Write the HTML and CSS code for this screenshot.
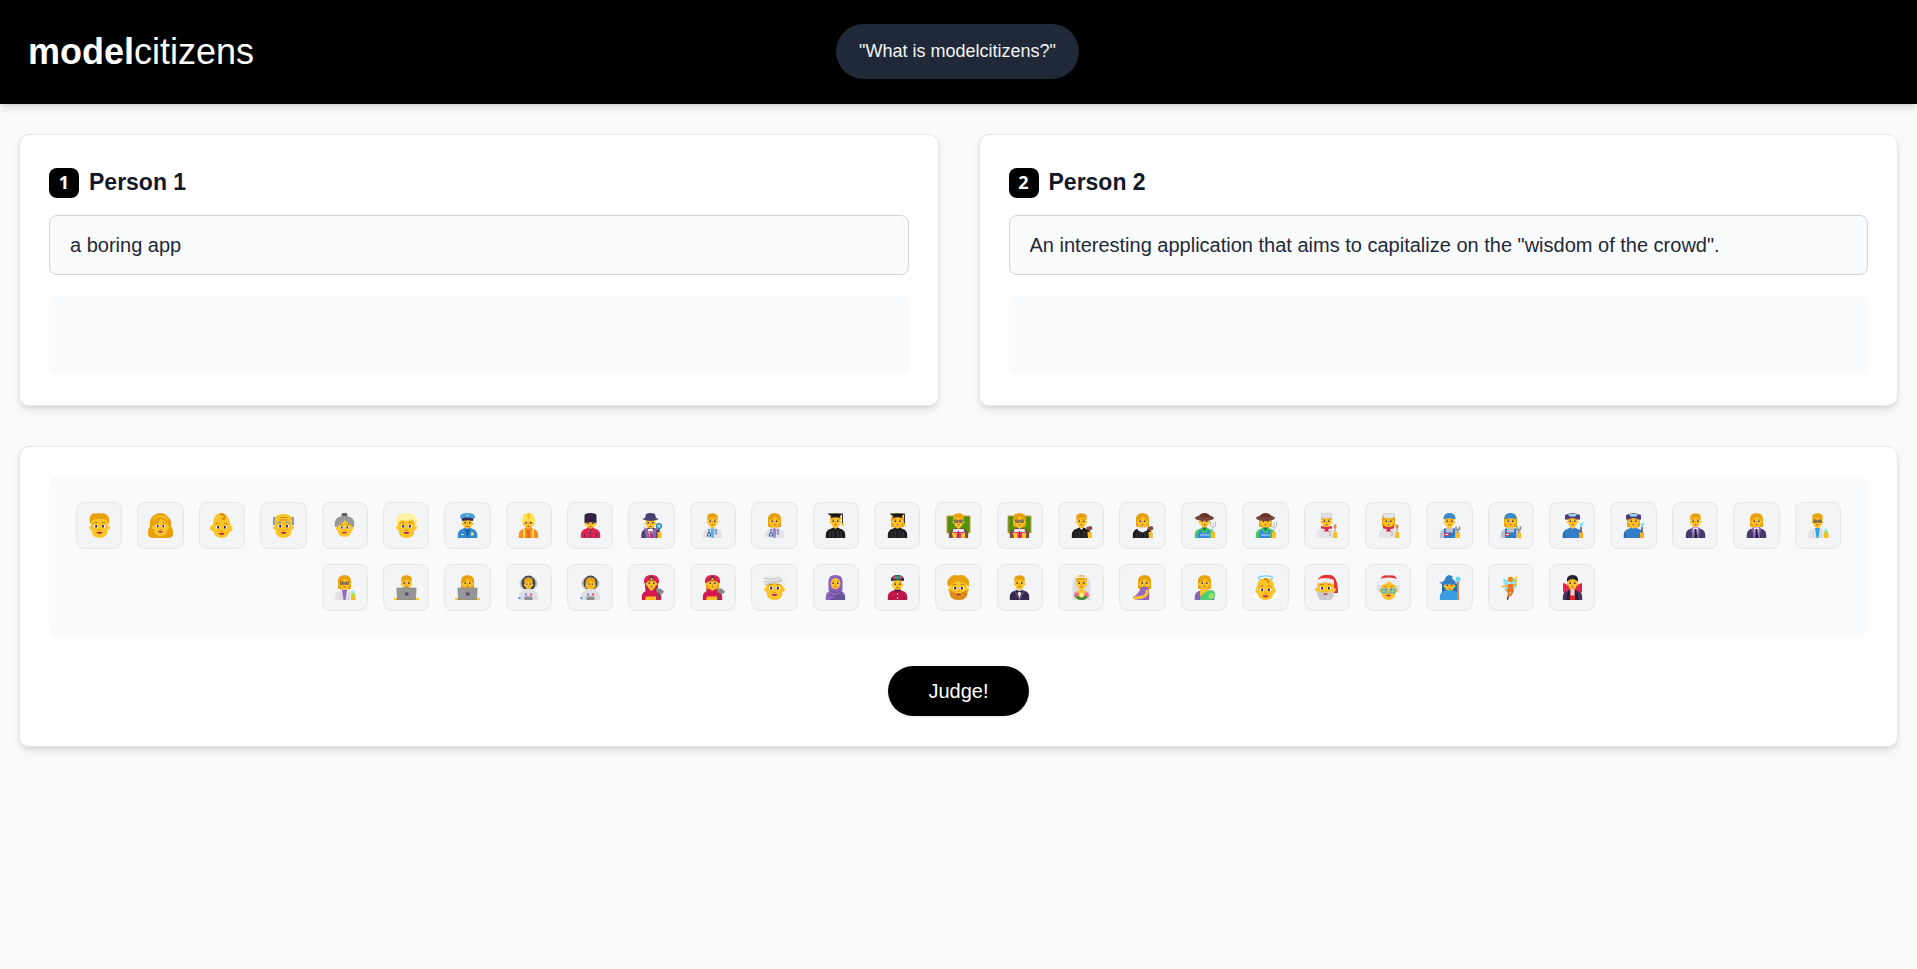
FILE: index.html
```html
<!DOCTYPE html>
<html lang="en">
<head>
<meta charset="utf-8">
<meta name="viewport" content="width=device-width, initial-scale=1">
<title>modelcitizens</title>
<link rel="stylesheet" href="styles.css">
</head>
<body>
<svg class="sprites" aria-hidden="true">
  <defs>
    <!-- large head -->
    <g id="face">
      <path fill="#fac42b" d="M4 7q0-6 8.500-6t8.500 6v6q2-.5 2 1.500t-2.500 2.500q0 8-8 8t-8-8q-2.500-.5-2.500-2.500t2-1.500z"/>
      <use href="#features"/>
    </g>
    <g id="features">
      <path fill="#fff" d="M7 12h4v2.500h-4zM14 12h4v2.500h-4z"/>
      <path fill="#382346" d="M8.200 12h2v2.500h-2zM14.800 12h2v2.500h-2z"/>
      <path fill="none" stroke="#c77d12" d="M6.500 10.200q2-1.500 4-.4M14.500 9.800q2-1.100 4 .4M11.500 17.300h2"/>
      <path fill="#bd214e" d="M9.500 19h6q-.5 2-3 2t-3-2z"/>
    </g>
    <!-- small head -->
    <g id="head">
      <path fill="#fac42b" d="M8 3h9v4.500q1.500 0 1.500 1.500t-1.700 1.500q-.3 2.500-2.300 3.500v2.500q-2 2-4 0v-2.500q-2-1-2.300-3.500-1.700 0-1.700-1.500t1.500-1.500z"/>
      <use href="#look"/>
    </g>
    <g id="look">
      <path fill="#49304f" d="M9.500 7.500h1.500v1.600h-1.500zM14 7.500h1.500v1.600h-1.500z"/>
      <path fill="none" stroke="#d28b13" stroke-width=".7" d="M9 6.300h2.300M13.700 6.300h2.300M12.500 8.500v1.500"/>
      <path fill="#c1264b" d="M11 11.500h3q-1.500 1.800-3 0z"/>
    </g>
    <path id="short" fill="#e8a00c" d="M7.300 7v-4q1-2.700 5.200-2.700t5.200 2.700v4h-1.200v-2.500q-4 1-8 0v2.500z"/>
    <path id="long" fill="#e8a00c" d="M6 13.500v-8q.5-5.300 6.500-5.300t6.500 5.300v8q-6.500 2.500-13 0z"/>
    <path id="fringe" fill="#e8a00c" d="M7.500 7.500v-4q2-3 5-3t5 3v4q-2-3-5-4-2 3-5 4z"/>
    <path id="body" d="M2.800 25v-3.500q.4-4.700 5-5.700l2.700-1.300 2 1.500 2-1.500 2.700 1.300q4.600 1 5 5.700v3.500z"/>
    <g id="man"><use href="#head"/><use href="#short"/></g>
    <g id="woman"><use href="#long"/><use href="#head"/><use href="#fringe"/></g>
    <g id="specs" fill="#8a8b8f" fill-opacity=".5" stroke="#66513c" stroke-width=".7"><path d="M8.500 7h3.200v2.500h-3.200zM13.300 7h3.200v2.500h-3.200zM11.700 8h1.600"/></g>

    <g id="medic">
      <use href="#body" fill="#e2e3e5"/>
      <path fill="none" stroke="#3f6ca8" stroke-width="1.200" d="M9 16v3l-1.500 2v2h3v-2l-1.500-2M16 16v3.500"/>
      <circle cx="16" cy="20.500" r="1.300" fill="#8ba0ba"/>
    </g>
    <g id="cap">
      <path fill="#242427" d="M8 2h9v3q-4.500-1.500-9 0z"/><path fill="#111" d="M4.500.5h15.500l-2.500 2h-10.500z"/>
      <path fill="none" stroke="#343034" d="M19.500 1v9.500"/><path fill="#ffb52d" d="M18.500 10h2v3h-2z"/>
    </g>
    <g id="gown"><use href="#body" fill="#1c1c1e"/><path stroke="#4a4a4e" stroke-width=".7" d="M7 19v6M10 18v7M15 18v7M18 19v6"/></g>
    <path id="board" fill="#51910c" stroke="#d49b3c" d="M1 3h23v17h-23z"/>
    <g id="books">
      <use href="#body" fill="#795044"/>
      <path fill="#e8e8ef" d="M7.500 16h10l1 4h-12z"/><path fill="#ed346f" d="M7 19h11v6h-11z"/><path fill="#9f2253" d="M12 18h1v7h-1z"/>
      <path fill="#fac42b" d="M6 20h4.500v5h-3.500zM15 20h4v5h-4z"/>
    </g>
    <g id="gavel"><path fill="#7b4637" d="M17.500 14l5-1 1 3.500-5.500 1zM19.500 16h1.500v4h-1.500z"/><path fill="#fbbd23" d="M18.500 19h4v6h-3.500z"/></g>
    <g id="farmwear">
      <use href="#body" fill="#43c867"/><path fill="#3984df" d="M8 17h2v3h5v-3h2v8h-11v-4z"/><path fill="#79b4ff" d="M8 21h9v2h-9z"/><path fill="#118348" d="M10 14.500h5l-2.500 4z"/>
      <path fill="none" stroke="#c0bfc6" d="M18.500 8.500v5q2.500 2 5 0v-5M21 9v11"/><path fill="#fbbd23" d="M19 19h4v6h-4z"/>
    </g>
    <g id="sunhat"><ellipse cx="12.500" cy="5" rx="9.500" ry="3" fill="#764438"/><path fill="#623328" d="M7.500 4v-2q5-4 10 0v2z"/></g>
    <g id="cookwear"><use href="#body" fill="#e5e4e9"/><path fill="#de234d" d="M7 13l5.500 1.200 5.500-1.200v2.500l-4 .5 1 2.500h-5l1-2.500-4-.5z"/><path stroke="#9c8c99" stroke-width=".7" d="M16 18v5"/><path fill="none" stroke="#d39154" d="M21 14v7"/><ellipse cx="21" cy="13.500" rx="1.600" ry="2.200" fill="#d39154"/><path fill="#fbbd23" d="M19.500 19h3.500v6h-4z"/></g>
    <path id="toque" fill="#e3e2e8" stroke="#c7c5cd" stroke-width=".5" d="M7 1q2-1.500 4-.5 2-1 4 0 2-1 3.500.5l-1 4h-9.500z"/>
    <g id="fixwear"><use href="#body" fill="#b9c1cd"/><path fill="#307bc7" d="M7 15.500h2v4h7v-4h2v9.500h-11z"/><path fill="#fff" stroke="#cd365a" d="M7.500 20.500h4v2h-4z"/><path fill="none" stroke="#83888d" stroke-width="1.500" d="M19 13.500v3h3.500v-3M20.800 17v4"/><path fill="#fbbd23" d="M19 19.500h4v5.500h-4z"/></g>
    <path id="bluecap" fill="#398bd1" d="M6.500 6v-1.500q1-4.500 6-4.500t6 4.500v1.500q-6-1.500-12 0z"/>
    <g id="weldwear"><use href="#body" fill="#327fc8"/><path fill="#2469aa" d="M3 19q2 1 2.500 6h-2.700z"/><path stroke="#5b4062" stroke-width="1.500" d="M21 14v6"/><path fill="#75dfff" d="M19.500 11l4-2-1 4-2.500 1.500z"/><path fill="#fbad21" d="M19 19.500h4v5.500h-4z"/></g>
    <g id="visor"><path fill="#523b78" d="M5 2q7.500-3.500 15 0v4.500h-2.500q-5-3-10 0h-2.500z"/><path fill="#86e2fb" d="M8 1h9l-1.500 2.500h-6z"/></g>
    <g id="suit"><use href="#body" fill="#433b6b"/><path fill="#9265c0" d="M8 15.500l2-1.500h5l2 1.500-1.500 9.500h-6z"/><path fill="#efe9fb" d="M10 14.500h5l-1.500 10.500h-2z"/><path fill="#211f32" d="M11.500 16h2l.7 9h-3z"/></g>
    <g id="labcoat"><use href="#body" fill="#e4e4e8"/><path fill="#c2c2cb" d="M8 16l1.500 9h-1zM17 16l-1.500 9h1z"/></g>
    <g id="flask"><path fill="#a0eeea" d="M19.500 15.500h3v3h-3z"/><path fill="#a8df34" d="M19.500 18h3l1 4h-4.500z"/><path fill="#fdbc25" d="M19 21h4.500v4h-4.500z"/></g>
    <g id="laptop"><path fill="#fac42b" d="M0 23h25v2h-25z"/><path fill="#969696" stroke="#777" stroke-width=".5" d="M2.800 13h19.400l-.7 11.700h-18z"/><path fill="#59456b" d="M11 17.500h3.500v3h-3.500z"/></g>
    <g id="astro"><ellipse cx="12.500" cy="8.500" rx="9" ry="7" fill="#bfc0c3"/><use href="#body" fill="#dedfe3"/><ellipse cx="12.500" cy="8" rx="7" ry="7.500" fill="#3e4145"/><path fill="#6e7073" d="M7 4q5.500-5 11 0l-2 1h-7z"/></g>
    <g id="controls"><path fill="#8f9194" d="M8.500 21.500h8v3.500h-8z"/><path fill="#5986ee" d="M2.500 22h2v2h-2zM9 18.500h2v2h-2z"/><path fill="#ee4a65" d="M14 18.500h2v2h-2z"/></g>
    <g id="firewear"><use href="#body" fill="#d81950"/><path fill="#ffbb22" d="M7 21.500h10v3.500h-11z"/><path fill="none" stroke="#625453" stroke-width="1.500" d="M20.500 15l-2 10"/><path fill="#87888d" d="M16.500 14l5-.5 3.500 3-2 2.500-5-1.500z"/></g>
    <g id="helmet"><path fill="#e1224f" d="M5 8v-3q1-5 7.500-5t7.500 5v3l-2-.5q-5-5-11 0z"/><circle cx="12.500" cy="3.500" r="2.200" fill="#423a43"/><path fill="#ffbd36" d="M11.500 3h2v2h-2z"/></g>
  </defs>
</svg>

<header class="topbar">
  <h1 class="brand"><strong>model</strong>citizens</h1>
  <p class="prompt">"What is modelcitizens?"</p>
</header>

<main class="page">
  <div class="people">
    <section class="card">
      <div class="card-title"><span class="badge">1</span><h2><label for="answer1">Person 1</label></h2></div>
      <input class="answer" id="answer1" type="text" value="a boring app" readonly>
      <div class="votes"></div>
    </section>
    <section class="card">
      <div class="card-title"><span class="badge">2</span><h2><label for="answer2">Person 2</label></h2></div>
      <input class="answer" id="answer2" type="text" value='An interesting application that aims to capitalize on the "wisdom of the crowd".' readonly>
      <div class="votes"></div>
    </section>
  </div>

  <section class="card">
    <div class="crowd">
      <button class="citizen" type="button" aria-label="Man"><svg viewBox="0 0 25 25"><use href="#face"/><path fill="#e8a00c" d="M3.500 11.500q-2-6.500.5-9.500 2-2.500 5-1.500 3-1 5 0 4-1 6 1.500 3.500 3 1.500 9.500l-2-5q-7-1.500-14 0z"/></svg></button>
      <button class="citizen" type="button" aria-label="Woman"><svg viewBox="0 0 25 25"><path fill="#e8a00c" d="M2 13q-1-8 4-10.500 2-2.500 6-2.500 5 0 7 3 5 3 4 10.500 4 6 1 10.500-4 1.500-8 1h-10q-5 0-6-3-.5-5 2-9z"/><use href="#face" transform="translate(2 2) scale(.84)"/><path fill="#e8a00c" d="M4 13q1-9 8.500-9 7 0 8.500 9-3-5-8-7-3 5-9 7z"/></svg></button>
      <button class="citizen" type="button" aria-label="Baby"><svg viewBox="0 0 25 25"><path fill="#fac42b" d="M4 10q1-10 8-10t9 10l1 3q2 0 1.500 3t-2.500 2q-2 7-8.500 7t-8.500-7q-3 0-3-3t2-2z"/><use href="#features" transform="translate(0 1)"/><path fill="none" stroke="#d98a0d" stroke-width="2" d="M11 1q5 0 4.500 3.500-.5 2.500-2.500 1"/></svg></button>
      <button class="citizen" type="button" aria-label="Old man"><svg viewBox="0 0 25 25"><path fill="#9b9b9d" d="M2 4h21v8h-21z"/><use href="#face"/><path fill="none" stroke="#d58a12" d="M9 4.500h7M8.500 7h8"/><path fill="none" stroke="#a4a4a5" stroke-width="1.800" d="M6 10l4-1M15 9l4 1"/><path fill="none" stroke="#cf870f" stroke-width=".8" d="M7.500 16.500h2M15.500 16.500h2"/></svg></button>
      <button class="citizen" type="button" aria-label="Old woman"><svg viewBox="0 0 25 25"><circle cx="12.500" cy="2.500" r="3" fill="#656467"/><path fill="#9a9a9c" d="M3 14q-2-11 9.500-11t9.500 11z"/><use href="#face" transform="translate(2 4) scale(.84 .79)"/><path fill="#9a9a9c" d="M3 13q0-9 9.500-9t9.500 9q-5-1-9-6-3 5-10 6z"/></svg></button>
      <button class="citizen" type="button" aria-label="Blond person"><svg viewBox="0 0 25 25"><use href="#face"/><path fill="#fff1a4" d="M2.500 12q-2-7 2-10 3-3 8-1.500 6-1.500 9 3 3 3 .5 8.500l-2-4-3-2q-3 3-8 1-4 0-6.500 5z"/></svg></button>
      <button class="citizen" type="button" aria-label="Police officer"><svg viewBox="0 0 25 25"><g transform="translate(0 1.500)"><use href="#head"/></g><use href="#body" fill="#3389d1"/><path fill="#1f5f9f" d="M10 16h5l-2.500 9z"/><path fill="#ffe05b" d="M6 21h3v1h-3zM16 19.500h2.500v3h-2.500z"/><path fill="#489de0" d="M5 4q0-4 7.500-4t7.500 4l-2 3q-5-1.500-11 0z"/><path fill="#332e50" d="M7 5.500q5.500-2 11 0v2.500q-5-1.500-11 0z"/><circle cx="12.500" cy="2.500" r="1" fill="#ffe05b"/></svg></button>
      <button class="citizen" type="button" aria-label="Construction worker"><svg viewBox="0 0 25 25"><g transform="translate(0 1.500)"><use href="#head"/></g><use href="#body" fill="#f78d24"/><path stroke="#ffe05b" stroke-width="1.800" d="M8 16v9M17 16v9"/><path fill="#e86722" d="M11 17h3v8h-3z"/><path fill="#ffe04d" d="M6.500 6.500q0-6.500 6-6.500t6 6.500l1 2h-14z"/><path fill="#f3bd22" d="M11.500 0h2v6h-2z"/></svg></button>
      <button class="citizen" type="button" aria-label="Guard"><svg viewBox="0 0 25 25"><g transform="translate(0 2)"><use href="#head"/></g><use href="#body" fill="#df2352"/><path stroke="#7d2948" d="M12.500 16v9M6.500 20v5M18.500 20v5"/><path fill="#35213f" d="M6.500 10v-8q1-2 6-2t6 2v8q-6-1.500-12 0z"/></svg></button>
      <button class="citizen" type="button" aria-label="Detective"><svg viewBox="0 0 25 25"><g transform="translate(-1 1.500)"><use href="#head"/></g><g transform="translate(-.5 0)"><use href="#body" fill="#4c426d"/></g><path fill="#8e66b7" d="M5 14l4 3 1 8h-3zM18 14l-4 3-.5 8h3z"/><path fill="#fff" d="M9 16h5l-1.500 9h-2z"/><path fill="#e32652" d="M10.500 18h2l1 7h-3z"/><path fill="#4a4270" d="M3 6l3-1 1-4q4-2 9 0l1 4 3 1q-8 4-17 0z"/><path stroke="#383b4c" stroke-width="1.500" d="M20 15v5"/><circle cx="20" cy="13" r="2.500" fill="#77dcff" stroke="#387ca5" stroke-width="1.200"/><path fill="#fbbd23" d="M18.500 19h4v6h-4z"/></svg></button>
      <button class="citizen" type="button" aria-label="Male doctor"><svg viewBox="0 0 25 25"><use href="#man"/><use href="#medic"/><path fill="#48b7ed" d="M10.500 15.500h4l-1 9.500h-2z"/></svg></button>
      <button class="citizen" type="button" aria-label="Female doctor"><svg viewBox="0 0 25 25"><use href="#woman"/><use href="#medic"/><path fill="#a080c9" d="M10.500 15.500h4l-1 9.500h-2z"/></svg></button>
      <button class="citizen" type="button" aria-label="Male graduate"><svg viewBox="0 0 25 25"><use href="#man"/><use href="#gown"/><use href="#cap"/></svg></button>
      <button class="citizen" type="button" aria-label="Female graduate"><svg viewBox="0 0 25 25"><use href="#woman"/><use href="#gown"/><use href="#cap"/></svg></button>
      <button class="citizen" type="button" aria-label="Male teacher"><svg viewBox="0 0 25 25"><use href="#board"/><use href="#man"/><use href="#specs"/><use href="#books"/></svg></button>
      <button class="citizen" type="button" aria-label="Female teacher"><svg viewBox="0 0 25 25"><use href="#board"/><use href="#woman"/><use href="#specs"/><use href="#books"/></svg></button>
      <button class="citizen" type="button" aria-label="Male judge"><svg viewBox="0 0 25 25"><use href="#man"/><use href="#gown"/><path fill="#fff" d="M11 15h3l-1.500 2z"/><use href="#gavel"/></svg></button>
      <button class="citizen" type="button" aria-label="Female judge"><svg viewBox="0 0 25 25"><use href="#woman"/><use href="#gown"/><path fill="#f1f0f5" d="M7 13l3.500 1.500h4l3.500-1.500-1 4.500-4.500 2-4.500-2z"/><use href="#gavel"/></svg></button>
      <button class="citizen" type="button" aria-label="Male farmer"><svg viewBox="0 0 25 25"><use href="#man"/><use href="#sunhat"/><use href="#farmwear"/></svg></button>
      <button class="citizen" type="button" aria-label="Female farmer"><svg viewBox="0 0 25 25"><use href="#woman"/><use href="#sunhat"/><use href="#farmwear"/></svg></button>
      <button class="citizen" type="button" aria-label="Male cook"><svg viewBox="0 0 25 25"><use href="#man"/><use href="#toque"/><use href="#cookwear"/></svg></button>
      <button class="citizen" type="button" aria-label="Female cook"><svg viewBox="0 0 25 25"><use href="#woman"/><use href="#toque"/><use href="#cookwear"/></svg></button>
      <button class="citizen" type="button" aria-label="Male mechanic"><svg viewBox="0 0 25 25"><use href="#man"/><use href="#bluecap"/><use href="#fixwear"/></svg></button>
      <button class="citizen" type="button" aria-label="Female mechanic"><svg viewBox="0 0 25 25"><use href="#woman"/><use href="#bluecap"/><use href="#fixwear"/></svg></button>
      <button class="citizen" type="button" aria-label="Male factory worker"><svg viewBox="0 0 25 25"><use href="#man"/><use href="#visor"/><use href="#weldwear"/></svg></button>
      <button class="citizen" type="button" aria-label="Female factory worker"><svg viewBox="0 0 25 25"><use href="#woman"/><use href="#visor"/><use href="#weldwear"/></svg></button>
      <button class="citizen" type="button" aria-label="Male office worker"><svg viewBox="0 0 25 25"><use href="#man"/><use href="#suit"/></svg></button>
      <button class="citizen" type="button" aria-label="Female office worker"><svg viewBox="0 0 25 25"><use href="#woman"/><use href="#suit"/></svg></button>
      <button class="citizen" type="button" aria-label="Male scientist"><svg viewBox="0 0 25 25"><use href="#man"/><use href="#specs"/><use href="#labcoat"/><path fill="#35a5df" d="M10 15h5l-1.500 10h-2z"/><use href="#flask"/></svg></button>

      <button class="citizen row-start" type="button" aria-label="Female scientist"><svg viewBox="0 0 25 25"><use href="#woman"/><use href="#specs"/><use href="#labcoat"/><path fill="#9168be" d="M10 15h5l-1.500 10h-2z"/><use href="#flask"/></svg></button>
      <button class="citizen" type="button" aria-label="Male technologist"><svg viewBox="0 0 25 25"><use href="#man"/><use href="#laptop"/></svg></button>
      <button class="citizen" type="button" aria-label="Female technologist"><svg viewBox="0 0 25 25"><use href="#woman"/><use href="#laptop"/></svg></button>
      <button class="citizen" type="button" aria-label="Male astronaut"><svg viewBox="0 0 25 25"><use href="#astro"/><g transform="translate(2.500 2.500) scale(.8)"><use href="#man"/></g><path fill="#dedfe3" d="M7 14h11v5h-11z"/><use href="#controls"/></svg></button>
      <button class="citizen" type="button" aria-label="Female astronaut"><svg viewBox="0 0 25 25"><use href="#astro"/><g transform="translate(2.500 2.500) scale(.8)"><use href="#woman"/></g><path fill="#dedfe3" d="M7 14h11v5h-11z"/><use href="#controls"/></svg></button>
      <button class="citizen" type="button" aria-label="Male firefighter"><svg viewBox="0 0 25 25"><path fill="#c11648" d="M5.500 5h14l-1 11h-12z"/><use href="#man"/><use href="#helmet"/><use href="#firewear"/></svg></button>
      <button class="citizen" type="button" aria-label="Female firefighter"><svg viewBox="0 0 25 25"><path fill="#c11648" d="M5.500 5h14l-1 11h-12z"/><use href="#woman"/><use href="#helmet"/><use href="#firewear"/></svg></button>
      <button class="citizen" type="button" aria-label="Person with turban"><svg viewBox="0 0 25 25"><use href="#face"/><path fill="#eeeeef" d="M2 12q-2-9 5-11 9-3 15 2 2 4 0 9-4-4-10-4t-10 4z"/><path fill="none" stroke="#bdbdc1" d="M2 3q8 3 16-1M2 6.500q9 2 18-2.500M3 9.500q9-1 18-4"/></svg></button>
      <button class="citizen" type="button" aria-label="Woman with headscarf"><svg viewBox="0 0 25 25"><path fill="#8c61bd" d="M5.500 15v-9q0-6 7-6t7 6v9l-7 3z"/><use href="#body" fill="#8b65bb"/><ellipse cx="12.500" cy="8.500" rx="4.800" ry="5.500" fill="#fac42b"/><use href="#look"/><path fill="none" stroke="#6b4992" d="M6 15q7 5 13 0M6 20q8 3 13-3"/><path fill="#65539a" d="M12 22l6-4 4 3v4h-16z"/></svg></button>
      <button class="citizen" type="button" aria-label="Person with skullcap"><svg viewBox="0 0 25 25"><g transform="translate(0 1)"><use href="#head"/></g><use href="#body" fill="#bf164b"/><path fill="#342449" d="M6 6v-2q1-4 6.500-4t6.500 4v2q-6-1.500-13 0z"/><path fill="#e23d61" d="M8 1h3v3h-3zM14 1h3v3h-3z"/><path fill="#229b67" d="M11 .5h3v4h-3z"/><path stroke="#332442" stroke-width="1.500" d="M9.500 15.500h6"/><path stroke="#ffb840" stroke-width="1.200" d="M12.500 18v2M12.500 22v2"/><path fill="none" stroke="#901342" d="M6 21v4M19 21v4"/></svg></button>
      <button class="citizen" type="button" aria-label="Bearded person"><svg viewBox="0 0 25 25"><use href="#face"/><path fill="#da8b1b" d="M3.500 15l4 2 5-.5 5 .5 4-2q1 10-9 10t-9-10z"/><path fill="#fac42b" d="M9 17h7v1h-7z"/><path fill="#bd214e" d="M10 19h5q-2.500 3-5 0z"/><path fill="#e8a00c" d="M2.500 12q-3-6 1-9 3-4 8-2.500 6-1.500 9 2 4 3 2 9.500l-3-4q-4 0-7-2-5 1-10 6z"/></svg></button>
      <button class="citizen" type="button" aria-label="Person in tuxedo"><svg viewBox="0 0 25 25"><use href="#man"/><use href="#body" fill="#37284d"/><path fill="#eeeef4" d="M9.500 14.500h6l-3 9z"/><path fill="#352546" d="M9.500 15l3 1 3-1v3l-3-1-3 1z"/><path fill="none" stroke="#6f5b89" d="M8 16l4.500 9 4.500-9"/></svg></button>
      <button class="citizen" type="button" aria-label="Bride"><svg viewBox="0 0 25 25"><path fill="#dedfe3" d="M3.500 25v-17q1-8 9-8t9 8v17z"/><use href="#man"/><path fill="#fac42b" d="M5 22q1-6 6-7h3q5 1 6 7z"/><path fill="#fff" d="M7.500 1.500h10v2q-5-2-10 0z"/><path fill="#44872f" d="M5 20h15q-2 5-7.500 5t-7.500-5z"/><path fill="#f067a2" d="M5.500 17.500h4v4h-4zM15.500 17.500h4v4h-4z"/><circle cx="12.500" cy="20" r="2.500" fill="#ffeb79"/></svg></button>
      <button class="citizen" type="button" aria-label="Pregnant woman"><svg viewBox="0 0 25 25"><g transform="translate(2 0)"><use href="#woman"/></g><path fill="#9565c4" d="M11 12h7q2 5 1 13h-9q-7 0-7-3 6-3 8-10z"/><path fill="none" stroke="#fac42b" stroke-width="3" d="M17 15q1 6-5 7t-8 1"/></svg></button>
      <button class="citizen" type="button" aria-label="Breastfeeding woman"><svg viewBox="0 0 25 25"><use href="#woman"/><use href="#body" fill="#8961b7"/><path fill="#fac42b" d="M8 15h8l5 4-4 4-9-2z"/><path fill="#51ce72" d="M8 23q4-7 11-8 4 0 4 5 0 5-6 5h-9z"/><circle cx="19.500" cy="21" r="2.800" fill="#98e36a"/></svg></button>
      <button class="citizen" type="button" aria-label="Angel"><svg viewBox="0 0 25 25"><path fill="#fff" d="M0 19l6-1v6q-5 0-6-5zM25 19l-6-1v6q5 0 6-5z"/><ellipse cx="12.500" cy="3" rx="7" ry="2.200" fill="none" stroke="#6dcff2" stroke-width="1.300"/><path fill="#fac42b" d="M4 11q1-8 8.500-8t8.500 8l1 3q2 3-1 4-2 7-8.500 7t-8.500-7q-3-1-1-4z"/><use href="#features" transform="translate(0 1.500)"/><path fill="none" stroke="#d98a0d" stroke-width="1.800" d="M11 4q5 0 4 4"/></svg></button>
      <button class="citizen" type="button" aria-label="Santa Claus"><svg viewBox="0 0 25 25"><path fill="#e23131" d="M4 8q1-9 12-8 8 1 8 18h-4l-1-10z"/><g transform="translate(-1 0)"><use href="#face"/></g><path fill="#e63333" d="M3 7q1-8 13-7 5 2 5 8z"/><path fill="#efedf1" d="M2 5q9-4 18 0v4q-9-3-18 0z"/><path fill="#cbccd0" d="M3 15l5 3 3.500-1 3.500 1 5-3q1 11-8.500 11t-8.500-11z"/><path fill="#bc224d" d="M9 18.500h5q-2.500 3-5 0z"/></svg></button>
      <button class="citizen" type="button" aria-label="Mrs. Claus"><svg viewBox="0 0 25 25"><path fill="#dcdde0" d="M3 5h19q3 5 1 12h-21q-3-7 1-12z"/><use href="#face" transform="translate(2 3) scale(.84 .88)"/><path fill="#df3737" d="M3.500 6q2-7 9-5.500 8-1.500 9 5.500z"/><path fill="#efedf1" d="M3 4q9-3 19 0l1 6q-6 1-10-4-4 5-11 4z"/><path fill="#6dc9d6" fill-opacity=".7" stroke="#3ca7b5" stroke-width=".8" d="M5 14h6v4h-5zM14 14h6l-1 4h-5z"/></svg></button>
      <button class="citizen" type="button" aria-label="Mage"><svg viewBox="0 0 25 25"><path fill="#226ab4" d="M5 9h15v8h-15z"/><g transform="translate(0 2)"><use href="#head"/></g><use href="#body" fill="#399be2"/><path fill="#327fc8" d="M2 8l5-2q2-6 5.500-6l4 2-2 1q3 2 4 4l3 1q-10 3-19.500 0z"/><path stroke="#c9875a" stroke-width="2" d="M21 5v20"/><circle cx="21" cy="4" r="2.600" fill="#68d8ed"/></svg></button>
      <button class="citizen" type="button" aria-label="Fairy"><svg viewBox="0 0 25 25"><path fill="#8be1f2" d="M12 9q-5-7-7-5 0 7 4 7-4 2-2 5l6-5q6 4 6 0l-3-2q4-5 1-6-3 0-5 6z"/><circle cx="12.500" cy="4.500" r="2.800" fill="#dd911d"/><path fill="none" stroke="#f4ae24" stroke-width="1.500" d="M4 11.500l8-1 6-1v-6"/><path fill="#ee7429" d="M10 9h5l1 7-6 1zM8.500 14h7v3h-7z"/><path fill="none" stroke="#dc7621" stroke-width="2" d="M11 16l-1 7M15 16l-3 5"/><path fill="#634063" d="M9 22h2l-1 3h-1z"/><path fill="#ffdf4c" d="M18 0l1 2 2 .5-2 1-1 2-1-2-2-1 2-.5z"/></svg></button>
      <button class="citizen" type="button" aria-label="Vampire"><svg viewBox="0 0 25 25"><path fill="#df2353" d="M3 8l6 2h7l6-2v9l-5 3h-9l-5-3z"/><use href="#head"/><path fill="#262430" d="M7 7q-1-7 5.500-7t5.500 7l-2-2-3.500-1-3.500 1z"/><use href="#body" fill="#49345f"/><path fill="#dd2730" d="M10 15h5l1 10h-7z"/><path fill="#d8d7df" d="M10.500 14.500h4v6h-4z"/><path fill="#281e38" d="M8 16l2-1v10h-4zM17 16l-2-1v10h4z"/></svg></button>
    </div>
    <div class="actions"><button class="judge" type="button">Judge!</button></div>
  </section>
</main>
</body>
</html>
```
FILE: styles.css
```css
* {
  box-sizing: border-box;
  margin: 0;
}

body {
  min-height: 100vh;
  background: #f9fafc;
  color: #111827;
  font-family: "Liberation Sans", Arial, sans-serif;
  font-size: 20px;
}

.sprites {
  position: absolute;
  width: 0;
  height: 0;
}

.topbar {
  display: grid;
  grid-template-columns: 1fr auto 1fr;
  align-items: center;
  padding: 24px 30px 25px 28px;
  background: #000;
  color: #fff;
  box-shadow: 0 5px 8px -1px rgba(0, 0, 0, 0.12), 0 2px 5px -2px rgba(0, 0, 0, 0.12);
}

.brand {
  font-size: 36px;
  line-height: 45px;
  font-weight: 400;
}

.brand strong {
  font-weight: 700;
}

.prompt {
  padding: 15px 23px;
  border-radius: 28px;
  background: #1f2937;
  color: #f3f4f6;
  font-size: 18px;
  line-height: 25px;
}

.page {
  display: flex;
  flex-direction: column;
  gap: 40px;
  padding: 30px 19px;
}

.people {
  display: grid;
  grid-template-columns: 1fr 1fr;
  gap: 40px;
}

.card {
  padding: 30px 29px;
  border: 1px solid #e5e7eb;
  border-radius: 10px;
  background: #fff;
  box-shadow: 0 5px 8px -1px rgba(0, 0, 0, 0.1), 0 2px 5px -2px rgba(0, 0, 0, 0.1);
}

.card-title {
  display: flex;
  align-items: center;
  gap: 10px;
  margin-bottom: 15px;
}

.card-title h2 {
  font-size: 23px;
  line-height: 35px;
}

.badge {
  width: 30px;
  height: 30px;
  border-radius: 8px;
  background: #000;
  color: #fff;
  font-family: "Open Sans", "Noto Sans", sans-serif;
  font-size: 18px;
  font-weight: 700;
  line-height: 28px;
  text-align: center;
}

.answer {
  display: block;
  width: 100%;
  height: 60px;
  padding: 0 20px;
  border: 1px solid #d1d5db;
  border-radius: 8px;
  background: #f9fafc;
  color: #1f2937;
  font: inherit;
}

.votes {
  height: 80px;
  margin-top: 20px;
  border-radius: 8px;
  background: #f9fafc;
}

.crowd {
  display: grid;
  grid-template-columns: repeat(29, 1fr);
  gap: 15px;
  padding: 25px 27px;
  border-radius: 8px;
  background: #f9fafc;
}

.citizen {
  display: flex;
  align-items: center;
  justify-content: center;
  height: 47px;
  padding: 0;
  border: 1px solid #e5e7eb;
  border-radius: 8px;
  background: #f3f4f6;
}

.citizen svg {
  width: 25px;
  height: 25px;
}

.row-start {
  grid-column-start: 5;
}

.actions {
  display: flex;
  justify-content: center;
  margin-top: 30px;
}

.judge {
  height: 50px;
  padding: 0 40px;
  border: 0;
  border-radius: 25px;
  background: #000;
  color: #fff;
  font: inherit;
  box-shadow: 0 1px 3px rgba(0, 0, 0, 0.1);
}

@media (max-width: 1600px) {
  .crowd {
    display: flex;
    flex-wrap: wrap;
    justify-content: center;
  }

  .citizen {
    width: 46px;
  }
}
```
